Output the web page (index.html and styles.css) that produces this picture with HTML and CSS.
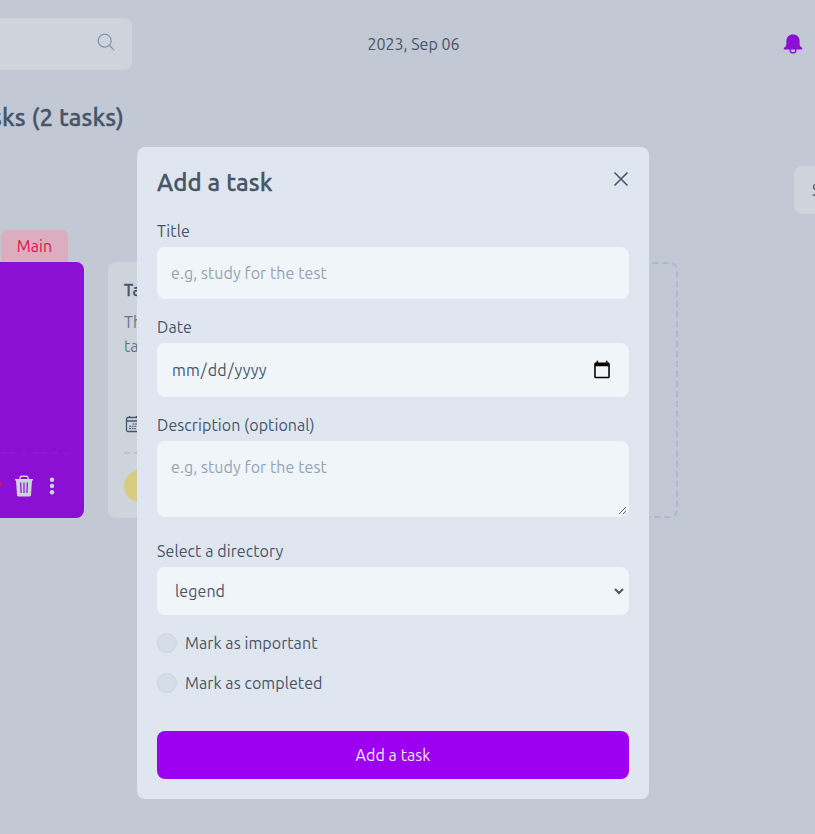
FILE: index.html
```html
<!DOCTYPE html>
<html lang="en">
<head>
<meta charset="utf-8">
<title>Tasks</title>
<link rel="stylesheet" href="styles.css">
</head>
<body>
<div class="page">
  <header class="topbar">
    <div class="search">
      <svg width="20" height="20" viewBox="0 0 20 20" fill="none" stroke="currentColor" stroke-width="1.3"><circle cx="8.7" cy="8.7" r="6.5"/><path d="M13.3 13.3l4.8 4.8"/></svg>
    </div>
    <time class="today">2023, Sep 06</time>
    <svg class="bell" width="20" height="20" viewBox="0 0 20 20"><path fill="currentColor" d="M10 .5C6 .5 3.500 3 3.400 6.800V10c0 1.500-.7 2.500-2 3.500-.9.700-1 1.900.2 1.900h16.800c1.200 0 1.100-1.200.2-1.900-1.300-1-2-2-2-3.500V6.800C16.500 3 14 .5 10 .5z"/><path d="M7.200 15v1.800c0 1.400 1 2.100 2.800 2.100s2.800-.7 2.800-2.100V15" fill="none" stroke="currentColor" stroke-width="1.400"/></svg>
  </header>
  <h1 class="heading"><span>All tasks (2 tasks)</span></h1>
  <div class="toolbar"><div class="sort">Sort by</div></div>
  <main class="cards">
    <div class="task-column">
      <span class="tag">Main</span>
      <article class="card card-main">
        <footer class="actions">
          <i class="heart"></i>
          <svg width="18" height="22" viewBox="0 0 18 22"><path fill="none" stroke="currentColor" stroke-width="1.400" d="M5 4V2.800C5 1.700 5.500 1.300 6.500 1.300h5c1 0 1.500.4 1.500 1.500V4"/><path fill="currentColor" fill-rule="evenodd" d="M0 4h18v1.500h-1L16 20c-.1 1.200-.7 1.500-1.800 1.500H3.800C2.700 21.500 2.100 21.200 2 20L1 5.500H0zM5 7.500l.5 10.500h1.200L6.300 7.500zM8.400 7.500V18h1.200V7.500zM11.700 7.500L11.300 18h1.200L13 7.500z"/></svg>
          <svg width="6" height="18" viewBox="0 0 6 18" fill="currentColor"><circle cx="3" cy="2.800" r="2.200"/><circle cx="3" cy="9" r="2.200"/><circle cx="3" cy="15.200" r="2.200"/></svg>
        </footer>
      </article>
    </div>
    <article class="card card-second">
      <h2>Task 2</h2>
      <p>This<br>task</p>
      <svg class="calendar" width="18" height="18" viewBox="0 0 18 18" fill="none" stroke="currentColor" stroke-width="1.300"><rect x="2.500" y="2.500" width="13" height="14" rx="1.500"/><path d="M2.500 6h13M5.500 1v2M12.500 1v2"/><path d="M8.500 9h4.500M5 11.300h8M5 13.600h7" stroke-dasharray="2 .6" stroke-width="1"/></svg>
      <footer class="card-footer"><i class="status"></i></footer>
    </article>
    <div class="new-card"></div>
  </main>
</div>

<div class="overlay">
  <section class="modal" role="dialog">
    <div class="modal-head">
      <h2>Add a task</h2>
      <button class="close" type="button"><svg width="16" height="16" viewBox="0 0 16 16" fill="none" stroke="currentColor" stroke-width="1.600"><path d="M1.500 1.500l13 13M14.500 1.500l-13 13"/></svg></button>
    </div>
    <form class="form">
      <label class="field"><span>Title</span><input class="control title-input" type="text" placeholder="e.g, study for the test"></label>
      <label class="field"><span>Date</span><input class="control date-input" type="date"></label>
      <label class="field"><span>Description (optional)</span><textarea class="control desc-input" placeholder="e.g, study for the test"></textarea></label>
      <label class="field directory"><span>Select a directory</span><select class="control select-input"><option>legend</option></select></label>
      <div class="check"><i></i><span>Mark as important</span></div>
      <div class="check"><i></i><span>Mark as completed</span></div>
      <button class="submit" type="button">Add a task</button>
    </form>
  </section>
</div>
</body>
</html>
```
FILE: styles.css
```css
* { box-sizing: border-box; margin: 0; padding: 0; }
body {
  width: 815px; height: 834px; overflow: hidden;
  background: #c2c8d4; color: #475569;
  font: 400 16px/24px Ubuntu, "Noto Sans", sans-serif;
  letter-spacing: .08px;
}
input, textarea, select, button { font: inherit; letter-spacing: inherit; color: inherit; border: 0; outline: 0; }
svg { display: block; flex: none; }
.page { height: 834px; overflow: hidden; }
.topbar { height: 88px; display: grid; grid-template-columns: 132px 1fr 32px; align-items: center; }
.search { height: 52px; background: #cdd4dc; border-radius: 0 8px 8px 0; display: flex; justify-content: flex-end; padding: 14px 16px 0 0; color: #8494b0; }
.today { justify-self: center; margin-right: 88px; letter-spacing: 0; }
.bell { color: #8b10d3; }
.heading { width: 124px; height: 32px; margin-top: 14px; display: flex; justify-content: flex-end; overflow: hidden; white-space: nowrap; font-size: 24px; line-height: 32px; font-weight: 500; letter-spacing: .15px; -webkit-text-stroke: .35px; }
.heading span { flex: none; }
.toolbar { margin-top: 32px; display: flex; justify-content: flex-end; }
.sort { width: 21px; height: 48px; overflow: hidden; white-space: nowrap; padding: 12px 0 12px 18px; background: #cdd4dc; border-radius: 8px 0 0 8px; }
.cards { margin-top: 16px; display: grid; grid-template-columns: 84px 273px 273px; gap: 24px; align-items: end; height: 288px; }
.task-column { display: flex; flex-direction: column; }
.tag { width: 67px; height: 32px; margin-left: 1px; background: #dcadbf; color: #d9134e; border-radius: 6px 6px 0 0; text-align: center; line-height: 32px; }
.card { height: 256px; border-radius: 8px; background: #cdd4dc; }
.card-main { background: #8b10d3; border-radius: 0 8px 8px 0; display: flex; align-items: flex-end; }
.actions { width: 69px; height: 66px; border-top: 2px dashed #9118cf; display: flex; align-items: center; color: #cdd4dc; }
.heart { width: 2px; height: 4px; background: #d9134e; border-radius: 0 2px 2px 0; margin: -4px 13px 0 0; }
.actions svg + svg { margin-left: 16px; }
.card-second { padding: 16px; display: flex; flex-direction: column; }
.card-second h2 { font-size: 16px; line-height: 24px; font-weight: 500; -webkit-text-stroke: .35px; }
.card-second p { margin-top: 8px; color: #64748b; }
.calendar { margin-top: 57px; }
.card-footer { margin-top: 19px; border-top: 2px dashed #b9c2ce; padding-top: 16px; }
.status { display: block; width: 32px; height: 32px; border-radius: 50%; background: #d9cc80; }
.new-card { height: 256px; border: 2px dashed #adb9c9; border-radius: 8px; }

.overlay { position: fixed; inset: 0; }
.modal { width: 512px; height: 652px; margin: 147px 0 0 137px; padding: 20px; border-radius: 8px; background: #e0e6f0; }
.modal-head { height: 32px; display: flex; justify-content: space-between; align-items: flex-start; }
.modal-head h2 { font-size: 24px; line-height: 32px; font-weight: 500; letter-spacing: .15px; -webkit-text-stroke: .35px; }
.close { background: none; margin-top: 4px; }
.form { margin-top: 20px; display: flex; flex-direction: column; }
.field { display: flex; flex-direction: column; align-items: flex-start; margin-bottom: 16px; }
.field span { line-height: 24px; margin-bottom: 4px; }
.control { width: 472px; background: #f0f5f9; border: 2px solid #f0f5f9; border-radius: 8px; padding: 12px; }
.control::placeholder { color: #94a3b8; opacity: 1; }
.title-input { height: 52px; }
.date-input { height: 54px; }
.date-input::-webkit-calendar-picker-indicator { width: 20px; height: 20px; padding: 2px; margin-right: 1px; background-size: 100%; }
.desc-input { height: 76px; resize: vertical; display: block; }
.directory { margin-top: 6px; }
.select-input { height: 48px; padding: 10px 0 10px 12px; }
.check { height: 24px; margin-bottom: 16px; display: flex; align-items: center; gap: 8px; }
.check i { width: 20px; height: 20px; border-radius: 50%; background: #d5dde7; border: 1px solid #cbd5e1; }
.submit { height: 48px; margin-top: 20px; border-radius: 8px; background: #9d00f0; color: #f1e5fb; }
```
